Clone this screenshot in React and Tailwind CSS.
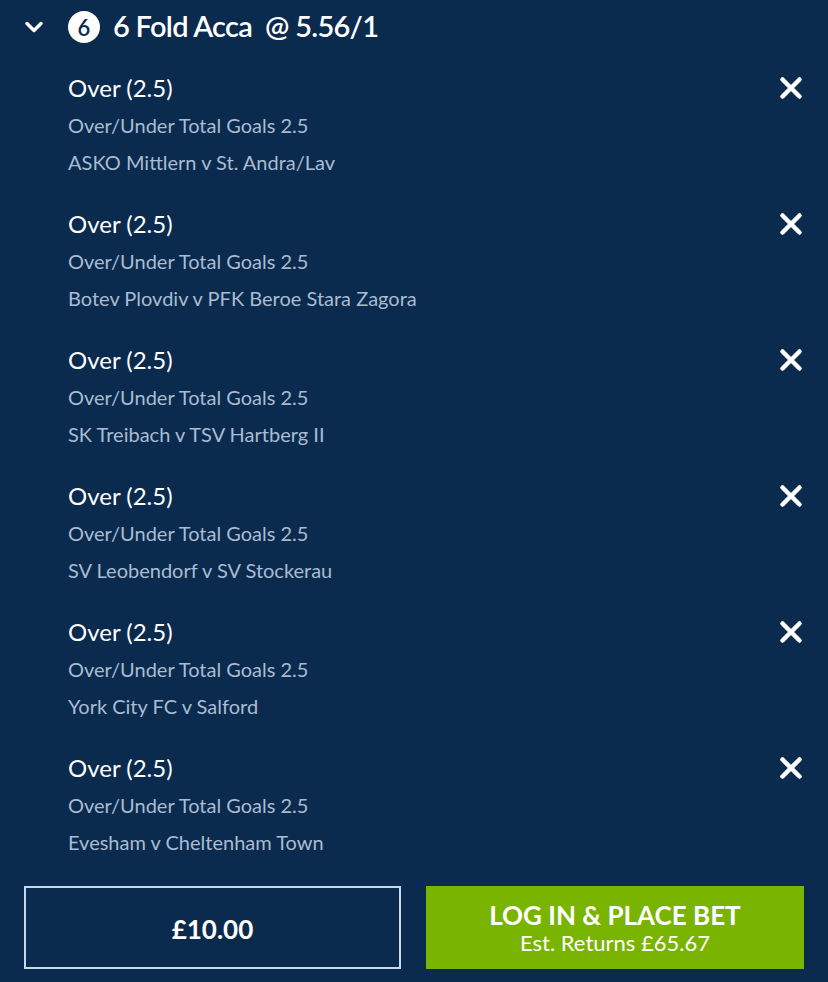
import { X, ChevronDown } from "lucide-react";

const selections = [
	{ pick: "Over (2.5)", market: "Over/Under Total Goals 2.5", event: "ASKO Mittlern v St. Andra/Lav" },
	{ pick: "Over (2.5)", market: "Over/Under Total Goals 2.5", event: "Botev Plovdiv v PFK Beroe Stara Zagora" },
	{ pick: "Over (2.5)", market: "Over/Under Total Goals 2.5", event: "SK Treibach v TSV Hartberg II" },
	{ pick: "Over (2.5)", market: "Over/Under Total Goals 2.5", event: "SV Leobendorf v SV Stockerau" },
	{ pick: "Over (2.5)", market: "Over/Under Total Goals 2.5", event: "York City FC v Salford" },
	{ pick: "Over (2.5)", market: "Over/Under Total Goals 2.5", event: "Evesham v Cheltenham Town" },
];

export default function App() {
	return (
		<div className="w-[828px] h-[982px] bg-[#0a2a4e] text-white font-['Lato','Open_Sans',sans-serif] overflow-hidden">
			{/* header */}
			<div className="flex items-center h-[54px] pl-[20px]">
				<ChevronDown className="w-[28px] h-[28px]" strokeWidth={3} />
				<div className="ml-[20px] w-[32px] h-[32px] rounded-full bg-white text-[#0a2a4e] flex items-center justify-center text-[22px] font-semibold">
					6
				</div>
				<div className="ml-[13px] text-[29px] font-semibold tracking-tight leading-none -mt-[3px]">
					6 Fold Acca&nbsp; @ 5.56/1
				</div>
			</div>

			<div className="mt-[16px] pl-[68px] pr-[20px]">
				{selections.map((s, i) => (
					<div key={i} className="flex justify-between pb-[25px]">
						<div>
							<p className="h-[37px] leading-[35px] text-[24px]">{s.pick}</p>
							<p className="h-[37px] leading-[37px] text-[20px] text-[#a9bcd2]">{s.market}</p>
							<p className="h-[37px] leading-[37px] text-[20px] text-[#a9bcd2]">{s.event}</p>
						</div>
						<X className="w-[34px] h-[34px] mt-[1px]" strokeWidth={3.2} />
					</div>
				))}
			</div>

			<div className="flex justify-between px-[24px]">
				<div className="w-[377px] h-[83px] border-2 border-[#c4d8ee] flex items-center justify-center text-[26px] font-bold pt-[3px]">
					£10.00
				</div>
				<div className="w-[378px] h-[83px] bg-[#79b401] flex flex-col items-center justify-center leading-tight pb-[2px]">
					<span className="text-[26px] font-bold">LOG IN &amp; PLACE BET</span>
					<span className="text-[22px] leading-none">Est. Returns £65.67</span>
				</div>
			</div>
		</div>
	);
}
